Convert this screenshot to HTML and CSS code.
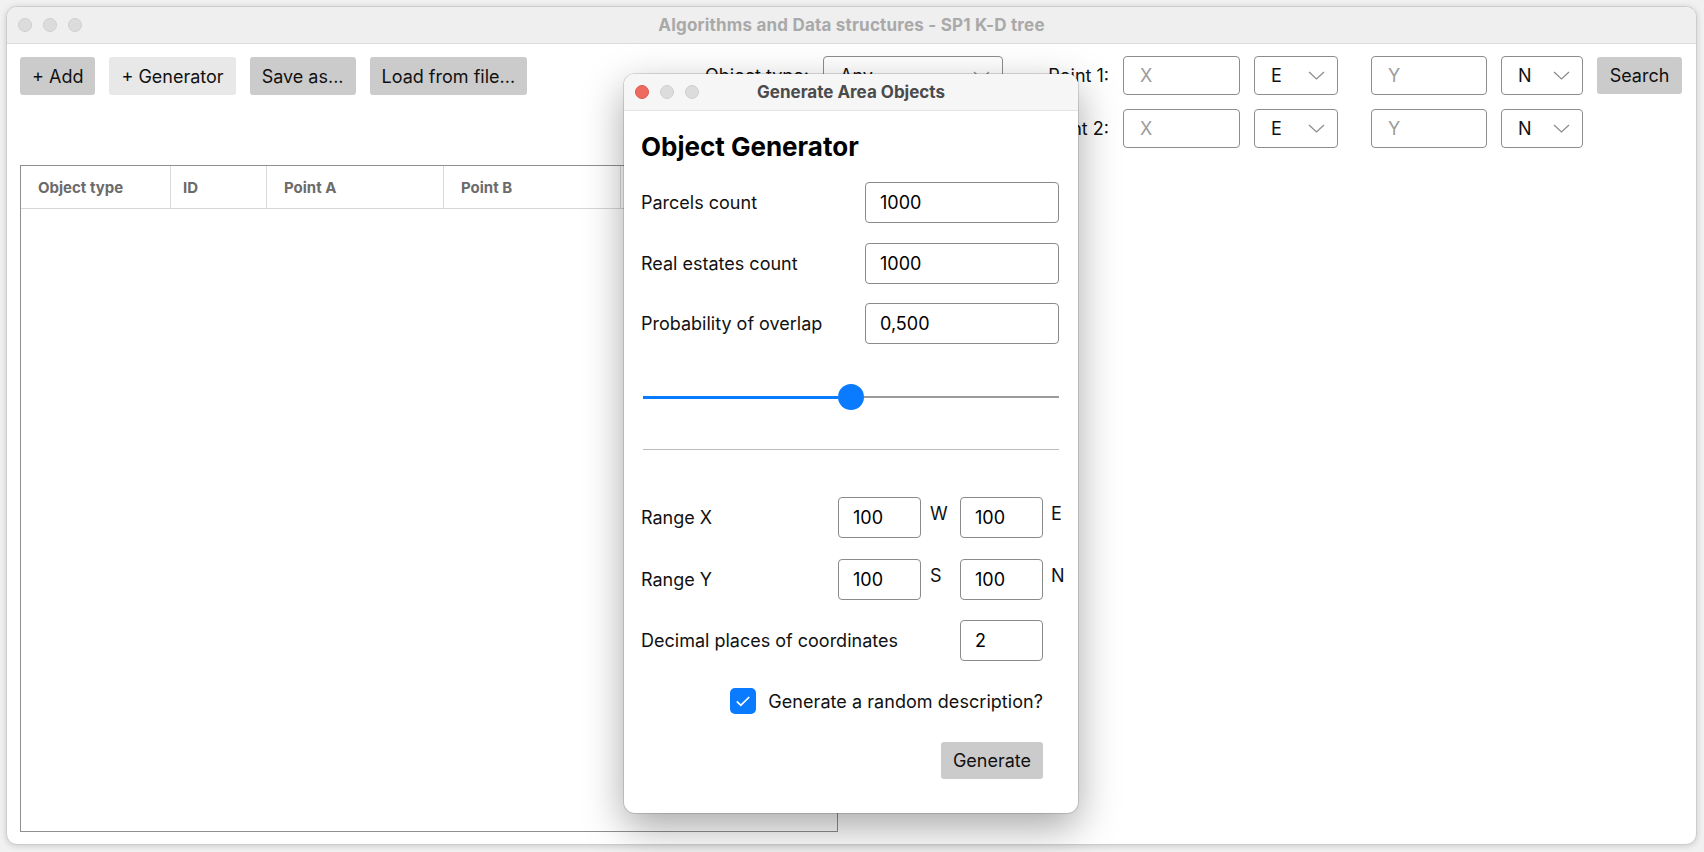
FILE: index.html
```html
<!DOCTYPE html>
<html>
<head>
<meta charset="utf-8">
<link rel="stylesheet" href="styles.css">
</head>
<body>
<div class="desktop">
  <div class="window">
    <div class="titlebar">
      <div class="lights"><span class="light"></span><span class="light"></span><span class="light"></span></div>
      <div class="title">Algorithms and Data structures - SP1 K-D tree</div>
      <div></div>
    </div>
    <div class="content">
      <div class="toolbar">
        <div class="actions">
          <button class="btn">+ Add</button>
          <button class="btn btn-soft">+ Generator</button>
          <button class="btn">Save as...</button>
          <button class="btn">Load from file...</button>
        </div>
        <div class="filters">
          <div class="flabel">Object type:</div>
          <div class="field"><span>Any</span><svg class="chev" viewBox="0 0 17 9"><polyline points="1,1 8.5,8 16,1"/></svg></div>
          <div class="flabel">Point 1:</div>
          <div class="field"><span class="placeholder">X</span></div>
          <div class="field"><span>E</span><svg class="chev" viewBox="0 0 17 9"><polyline points="1,1 8.5,8 16,1"/></svg></div>
          <div class="field yfield"><span class="placeholder">Y</span></div>
          <div class="field"><span>N</span><svg class="chev" viewBox="0 0 17 9"><polyline points="1,1 8.5,8 16,1"/></svg></div>
          <button class="btn search">Search</button>

          <div class="flabel row2">Point 2:</div>
          <div class="field"><span class="placeholder">X</span></div>
          <div class="field"><span>E</span><svg class="chev" viewBox="0 0 17 9"><polyline points="1,1 8.5,8 16,1"/></svg></div>
          <div class="field yfield"><span class="placeholder">Y</span></div>
          <div class="field"><span>N</span><svg class="chev" viewBox="0 0 17 9"><polyline points="1,1 8.5,8 16,1"/></svg></div>
        </div>
      </div>
      <div class="table">
        <div class="thead">
          <div class="th">Object type</div>
          <div class="th th-id">ID</div>
          <div class="th">Point A</div>
          <div class="th">Point B</div>
          <div class="th th-last">Description</div>
        </div>
      </div>
    </div>
  </div>

  <div class="dialog">
    <div class="dtitlebar">
      <div class="lights"><span class="light red"></span><span class="light"></span><span class="light"></span></div>
      <div class="dtitle">Generate Area Objects</div>
      <div></div>
    </div>
    <div class="dbody">
      <h1 class="dheading">Object Generator</h1>
      <div class="counts">
        <div>Parcels count</div>
        <div class="dinput">1000</div>
        <div>Real estates count</div>
        <div class="dinput">1000</div>
        <div>Probability of overlap</div>
        <div class="dinput">0,500</div>
      </div>
      <div class="slider">
        <div class="track-on"></div>
        <div class="thumb"></div>
        <div class="track-off"></div>
      </div>
      <div class="sep"></div>
      <div class="ranges">
        <div>Range X</div>
        <div class="dinput">100</div>
        <div class="unit">W</div>
        <div class="dinput">100</div>
        <div class="unit unit-end">E</div>

        <div>Range Y</div>
        <div class="dinput">100</div>
        <div class="unit">S</div>
        <div class="dinput">100</div>
        <div class="unit unit-end">N</div>

        <div class="full-label">Decimal places of coordinates</div>
        <div class="dinput col4">2</div>
      </div>
      <div class="checkrow">
        <div class="checkbox"><svg viewBox="0 0 26 26"><polyline points="6.8,13.4 10.8,17.4 19.2,9"/></svg></div>
        <div class="checklabel">Generate a random description?</div>
      </div>
      <div class="genrow">
        <button class="btn genbtn">Generate</button>
      </div>
    </div>
  </div>
</div>
</body>
</html>
```
FILE: styles.css
```css
* { box-sizing: border-box; }
html, body { margin: 0; padding: 0; }
body {
  width: 1704px;
  height: 852px;
  overflow: hidden;
  background: #f1f1f1;
  font-family: Inter, "Noto Sans", "Liberation Sans", sans-serif;
  font-size: 18px;
  color: #111;
}
.desktop {
  position: relative;
  width: 1704px;
  height: 852px;
  padding: 6px 7px 7px 6px;
}
.window {
  width: 1691px;
  height: 839px;
  background: #fff;
  border: 1px solid #cdcdcd;
  border-radius: 11px;
  overflow: hidden;
  box-shadow: 0 1px 6px rgba(0,0,0,0.16);
  display: flex;
  flex-direction: column;
}
.titlebar {
  flex: none;
  height: 37px;
  background: #efefef;
  border-bottom: 1px solid #dcdcdc;
  display: grid;
  grid-template-columns: 1fr auto 1fr;
  align-items: center;
}
.lights { display: flex; gap: 11px; padding-left: 11px; }
.light {
  width: 14px;
  height: 14px;
  border-radius: 50%;
  background: #dcdcdc;
  border: 1px solid #cfcfcf;
}
.light.red { background: #ee6a5e; border-color: #dc5a4f; }
.title { font-size: 17px; font-weight: 700; letter-spacing: 0.2px; color: #a9a9a9; }

.content {
  flex: 1;
  padding: 12px 14px 12px 13px;
  display: flex;
  flex-direction: column;
}
.toolbar {
  display: flex;
  justify-content: space-between;
  align-items: flex-start;
}
.actions { display: flex; gap: 14px; padding-top: 1px; }
.btn {
  height: 38px;
  padding: 0 12px;
  border: none;
  border-radius: 3px;
  background: #cbcbcb;
  font-family: inherit;
  font-size: 18px;
  color: #111;
  display: flex;
  align-items: center;
  justify-content: center;
}
.btn-soft { background: #e8e8e8; }

.filters {
  display: grid;
  grid-template-columns: 110px 180px 92px 117px 84px 135px 82px 85px;
  column-gap: 14px;
  row-gap: 14px;
  grid-auto-rows: 39px;
  align-items: center;
}
.flabel { text-align: right; }
.row2 { grid-column: 3; }
.field {
  height: 39px;
  border: 1px solid #8d8d8d;
  border-radius: 4px;
  padding: 0 12px 0 16px;
  display: flex;
  align-items: center;
  justify-content: space-between;
  background: #fff;
}
.placeholder { color: #9c9c9c; }
.chev { width: 17px; height: 9px; fill: none; stroke: #8a8a8a; stroke-width: 1.2; }
.yfield { margin-left: 19px; }
.search { height: 37px; align-self: start; margin-top: 1px; }

.table {
  margin-top: 17px;
  width: 818px;
  height: 667px;
  border: 1px solid #8f8f8f;
}
.thead {
  display: grid;
  grid-template-columns: 150px 96px 177px 177px 1fr;
  height: 43px;
  border-bottom: 1px solid #d6d6d6;
}
.th {
  border-right: 1px solid #d9d9d9;
  padding-left: 17px;
  display: flex;
  align-items: center;
  font-size: 15px;
  font-weight: 700;
  color: #6b6b6b;
}
.th-id { padding-left: 12px; }
.th-last { border-right: none; }

.dialog {
  position: absolute;
  left: 624px;
  top: 74px;
  width: 454px;
  height: 739px;
  background: #fff;
  border-radius: 11px;
  overflow: hidden;
  box-shadow: 0 0 0 1px rgba(0,0,0,0.13), 0 14px 40px rgba(0,0,0,0.35);
}
.dtitlebar {
  height: 37px;
  background: #f6f6f6;
  border-bottom: 1px solid #e3e3e3;
  display: grid;
  grid-template-columns: 1fr auto 1fr;
  align-items: center;
}
.dtitle { font-size: 17px; font-weight: 700; color: #4b4b4b; }
.dbody { padding: 20px 19px 0 17px; }
.dheading {
  margin: 0;
  font-size: 26px;
  line-height: 32px;
  font-weight: 700;
  color: #000;
}
.counts {
  margin-top: 19px;
  display: grid;
  grid-template-columns: 1fr 194px;
  grid-auto-rows: 41px;
  row-gap: 19.5px;
  align-items: center;
}
.dinput {
  height: 41px;
  border: 1px solid #8a8a8a;
  border-radius: 4px;
  padding: 0 14px;
  display: flex;
  align-items: center;
  color: #000;
}
.slider {
  margin: 40px 0 0 2px;
  height: 26px;
  display: flex;
  align-items: center;
}
.track-on { flex: 1; height: 3px; background: #0a7aff; }
.thumb { width: 26px; height: 26px; border-radius: 50%; background: #0a7aff; }
.track-off { flex: 1; height: 2px; background: #9b9b9b; }
.sep { margin: 39px 0 0 2px; height: 1px; background: #bcbcbc; }
.ranges {
  margin-top: 47px;
  display: grid;
  grid-template-columns: 1fr 83px 39px 83px 16px;
  grid-auto-rows: 41px;
  row-gap: 20.5px;
  align-items: center;
}
.unit { align-self: start; padding-top: 6px; padding-left: 9px; }
.unit-end { padding-left: 8px; }
.full-label { grid-column: 1 / 4; }
.col4 { grid-column: 4; }
.checkrow {
  margin: 27px 16px 0 0;
  height: 26px;
  display: flex;
  justify-content: flex-end;
  align-items: center;
  gap: 12px;
}
.checklabel { letter-spacing: 0.05px; }
.checkbox {
  width: 26px;
  height: 26px;
  border-radius: 5px;
  background: #0a7aff;
}
.checkbox svg { width: 26px; height: 26px; display: block; fill: none; stroke: #fff; stroke-width: 1.7; }
.genrow { margin: 28px 16px 0 0; display: flex; justify-content: flex-end; }
.genbtn { width: 102px; height: 37px; padding: 0; }
```
